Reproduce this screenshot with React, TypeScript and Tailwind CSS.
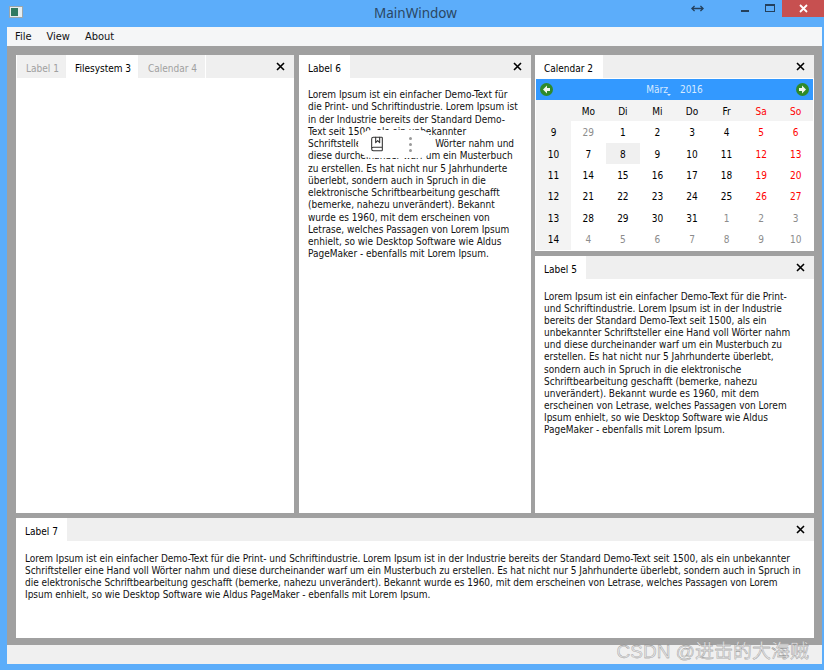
import { BookMarked, MoveHorizontal } from "lucide-react";

const lorem6 = [
  "Lorem Ipsum ist ein einfacher Demo-Text für",
  "die Print- und Schriftindustrie. Lorem Ipsum ist",
  "in der Industrie bereits der Standard Demo-",
  "Text seit 1500, als ein unbekannter",
  "Schriftsteller eine Hand voll Wörter nahm und",
  "diese durcheinander warf um ein Musterbuch",
  "zu erstellen. Es hat nicht nur 5 Jahrhunderte",
  "überlebt, sondern auch in Spruch in die",
  "elektronische Schriftbearbeitung geschafft",
  "(bemerke, nahezu unverändert). Bekannt",
  "wurde es 1960, mit dem erscheinen von",
  "Letrase, welches Passagen von Lorem Ipsum",
  "enhielt, so wie Desktop Software wie Aldus",
  "PageMaker - ebenfalls mit Lorem Ipsum.",
];

const lorem5 = [
  "Lorem Ipsum ist ein einfacher Demo-Text für die Print-",
  "und Schriftindustrie. Lorem Ipsum ist in der Industrie",
  "bereits der Standard Demo-Text seit 1500, als ein",
  "unbekannter Schriftsteller eine Hand voll Wörter nahm",
  "und diese durcheinander warf um ein Musterbuch zu",
  "erstellen. Es hat nicht nur 5 Jahrhunderte überlebt,",
  "sondern auch in Spruch in die elektronische",
  "Schriftbearbeitung geschafft (bemerke, nahezu",
  "unverändert). Bekannt wurde es 1960, mit dem",
  "erscheinen von Letrase, welches Passagen von Lorem",
  "Ipsum enhielt, so wie Desktop Software wie Aldus",
  "PageMaker - ebenfalls mit Lorem Ipsum.",
];

const lorem7 = [
  "Lorem Ipsum ist ein einfacher Demo-Text für die Print- und Schriftindustrie. Lorem Ipsum ist in der Industrie bereits der Standard Demo-Text seit 1500, als ein unbekannter",
  "Schriftsteller eine Hand voll Wörter nahm und diese durcheinander warf um ein Musterbuch zu erstellen. Es hat nicht nur 5 Jahrhunderte überlebt, sondern auch in Spruch in",
  "die elektronische Schriftbearbeitung geschafft (bemerke, nahezu unverändert). Bekannt wurde es 1960, mit dem erscheinen von Letrase, welches Passagen von Lorem",
  "Ipsum enhielt, so wie Desktop Software wie Aldus PageMaker - ebenfalls mit Lorem Ipsum.",
];

const weekdays = ["Mo", "Di", "Mi", "Do", "Fr", "Sa", "So"];

// [week number, days], days outside March are flagged by position
const weeks: { nr: number; days: number[] }[] = [
  { nr: 9, days: [29, 1, 2, 3, 4, 5, 6] },
  { nr: 10, days: [7, 8, 9, 10, 11, 12, 13] },
  { nr: 11, days: [14, 15, 16, 17, 18, 19, 20] },
  { nr: 12, days: [21, 22, 23, 24, 25, 26, 27] },
  { nr: 13, days: [28, 29, 30, 31, 1, 2, 3] },
  { nr: 14, days: [4, 5, 6, 7, 8, 9, 10] },
];

const CloseX = () => (
  <svg width="9" height="9" viewBox="0 0 9 9" className="text-black">
    <path d="M1 1l7 7M8 1l-7 7" stroke="currentColor" strokeWidth="1.6" fill="none" />
  </svg>
);

const TabBar = ({ tabs, active }: { tabs: { label: string; w: string }[]; active: string }) => (
  <div className="flex h-[23px] shrink-0 bg-[#efefef]">
    {tabs.map((t) => (
      <div
        key={t.label}
        className={`${t.w} flex items-center pl-[9px] pt-[3px] mr-px whitespace-nowrap ${
          t.label === active ? "bg-white text-black" : "bg-[#f0f0f0] text-[#a0a0a0]"
        }`}
      >
        {t.label}
      </div>
    ))}
    <div className="flex-1 border-l border-white -ml-px" />
    <div className="w-[23px] flex items-center pl-[5px]">
      <CloseX />
    </div>
  </div>
);

const TextLines = ({ lines, className }: { lines: string[]; className: string }) => (
  <div className={`${className} whitespace-nowrap text-[#111]`}>
    {lines.map((l) => (
      <div key={l}>{l}</div>
    ))}
  </div>
);

const CalArrow = ({ dir }: { dir: "left" | "right" }) => (
  <svg width="13" height="13" viewBox="0 0 13 13">
    <circle cx="6.5" cy="6.5" r="6.5" fill="#2f8a2a" />
    <path
      d={dir === "left" ? "M7 2.5L3 6.5l4 4V8h3V5H7z" : "M6 2.5l4 4-4 4V8H3V5h3z"}
      fill="#f4f8f0"
    />
  </svg>
);

const Calendar = () => (
  <div className="flex flex-col flex-1 mx-px mb-px">
    <div className="h-[21px] bg-[#3399ff] flex items-center justify-between px-[4px] text-[#d6eaff]">
      <CalArrow dir="left" />
      <div className="flex items-center gap-[12px]">
        <span className="relative">
          März
          <span className="absolute -right-[3px] bottom-[1px] w-0 h-0 border-x-2 border-t-2 border-x-transparent border-t-[#d6eaff]" />
        </span>
        <span>2016</span>
      </div>
      <CalArrow dir="right" />
    </div>
    <div className="grid grid-cols-[35px_repeat(7,1fr)] flex-1 grid-rows-7 text-center">
      <div className="bg-[#f3f3f3]" />
      {weekdays.map((d, i) => (
        <div
          key={d}
          className={`bg-[#f3f3f3] flex items-center justify-center pt-px ${i > 4 ? "text-[#ff0000]" : "text-black"}`}
        >
          {d}
        </div>
      ))}
      {weeks.map((w, wi) => (
        <div key={w.nr} className="contents">
          <div className="bg-[#f3f3f3] flex items-center justify-center pt-px text-black">{w.nr}</div>
          {w.days.map((d, i) => {
            const outside = (wi === 0 && i === 0) || (wi === 4 && i > 3) || wi === 5;
            const selected = wi === 1 && i === 1;
            return (
              <div
                key={i}
                className={`flex items-center justify-center pt-px ${selected ? "bg-[#f0f0f0]" : ""} ${
                  outside ? "text-[#8c8c8c]" : i > 4 ? "text-[#ff0000]" : "text-black"
                }`}
              >
                {d}
              </div>
            );
          })}
        </div>
      ))}
    </div>
  </div>
);

export default function App() {
  return (
    <div className="relative w-[824px] h-[670px] overflow-hidden bg-[#5cadfa] flex flex-col text-[10px] font-['DejaVu_Sans_Condensed','DejaVu_Sans',sans-serif]">
      {/* title bar */}
      <div className="h-[27px] shrink-0 flex items-start relative">
        <div className="mt-[6px] ml-[9px] w-[14px] h-[12px] bg-[#e8eef0] border border-[#9aa6ad] flex">
          <div className="w-[7px] h-[8px] mt-[1px] ml-px bg-[#2f7a62]" />
        </div>
        <div className="flex-1 pl-[351px] text-[13.5px] leading-[26px] text-[#2a4763] font-['Noto_Sans',sans-serif]">MainWindow</div>
        <MoveHorizontal size={13} strokeWidth={2.4} className="text-[#24405c] mt-[2px] mr-[37px]" />
        <div className="w-[8px] h-[2px] bg-[#24405c] mt-[10px] mr-[16px]" />
        <div className="w-[10px] h-[8px] border border-t-[2px] border-[#24405c] mt-[4px] mr-[7px]" />
        <div className="w-[42px] h-[17px] bg-[#c75050] flex items-center justify-center">
          <svg width="9" height="9" viewBox="0 0 9 9">
            <path d="M1 1l7 7M8 1l-7 7" stroke="#fff" strokeWidth="1.8" fill="none" />
          </svg>
        </div>
      </div>

      {/* client area */}
      <div className="flex-1 ml-[7px] mr-[2px] flex flex-col min-h-0">
        <div className="h-[19px] shrink-0 bg-[#f5f6f7] flex items-center pl-[8px] gap-[15px] text-[#111] text-[11px] pt-[2px]">
          <span>File</span>
          <span>View</span>
          <span>About</span>
        </div>
        <div className="flex-1 min-h-0 bg-[#a0a0a0] pt-[9px] pl-[9px] pr-[8px] pb-[7px] flex flex-col gap-[5px]">
          <div className="flex gap-[4px] h-[458px] shrink-0">
            <div className="w-[278px] mr-px bg-white flex flex-col border-l border-white">
              <TabBar
                active="Filesystem 3"
                tabs={[
                  { label: "Label 1", w: "w-[48px]" },
                  { label: "Filesystem 3", w: "w-[72px]" },
                  { label: "Calendar 4", w: "w-[66px]" },
                ]}
              />
            </div>
            <div className="w-[232px] bg-white flex flex-col relative">
              <TabBar active="Label 6" tabs={[{ label: "Label 6", w: "w-[50px]" }]} />
              <TextLines lines={lorem6} className="pl-[9px] pt-[11px] leading-[12.25px]" />
              {/* floating toolbar from the screenshot tool */}
              <div className="absolute left-[59px] top-[75px] w-[75px] h-[28px] rounded-full bg-white flex items-center pl-[11px] gap-[24px]">
                <BookMarked size={16} strokeWidth={1.6} className="text-[#333]" />
                <div className="flex flex-col gap-[3px]">
                  <span className="w-[3px] h-[3px] rounded-full bg-[#999]" />
                  <span className="w-[3px] h-[3px] rounded-full bg-[#999]" />
                  <span className="w-[3px] h-[3px] rounded-full bg-[#999]" />
                </div>
              </div>
            </div>
            <div className="w-[279px] flex flex-col gap-[5px]">
              <div className="h-[196px] shrink-0 bg-white flex flex-col">
                <TabBar active="Calendar 2" tabs={[{ label: "Calendar 2", w: "w-[67px]" }]} />
                <div className="h-px bg-white" />
                <Calendar />
              </div>
              <div className="flex-1 bg-white flex flex-col">
                <TabBar active="Label 5" tabs={[{ label: "Label 5", w: "w-[50px]" }]} />
                <TextLines lines={lorem5} className="pl-[9px] pt-[12px] leading-[12.1px]" />
              </div>
            </div>
          </div>
          <div className="h-[120px] shrink-0 bg-white flex flex-col">
            <TabBar active="Label 7" tabs={[{ label: "Label 7", w: "w-[50px]" }]} />
            <TextLines lines={lorem7} className="pl-[9px] pt-[12px] leading-[12px] tracking-[-0.024px]" />
          </div>
        </div>
        <div className="h-[19px] shrink-0 bg-[#f0f0f0]" />
      </div>
      <div className="h-[6px] shrink-0" />

      {/* watermark */}
      <div className="absolute right-[15px] top-[640px] text-[19px] leading-[24px] text-[#e4e4e4] font-['Liberation_Sans','Noto_Sans_CJK_SC',sans-serif] [-webkit-text-stroke:0.3px_#808080] whitespace-nowrap">
        CSDN @进击的大海贼
      </div>
    </div>
  );
}
